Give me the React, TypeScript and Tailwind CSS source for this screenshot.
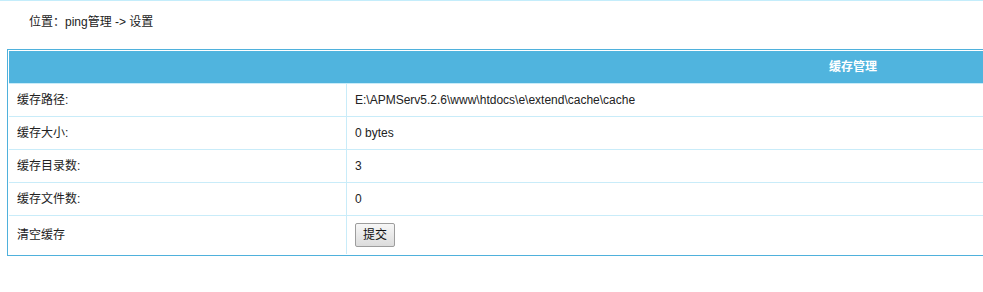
export default function App() {
  const rows = [
    { label: "缓存路径:", value: "E:\\APMServ5.2.6\\www\\htdocs\\e\\extend\\cache\\cache" },
    { label: "缓存大小:", value: "0 bytes" },
    { label: "缓存目录数:", value: "3" },
    { label: "缓存文件数:", value: "0" },
  ];

  return (
    <div
      className="w-full overflow-hidden bg-white text-xs text-[#222]"
      style={{ fontFamily: '"Liberation Sans", "Noto Sans CJK SC", sans-serif' }}
    >
      {/* top strip */}
      <div className="h-px bg-[#c4edfb]" />

      {/* breadcrumb */}
      <div className="h-[48px] pl-[29px] pt-[13px] leading-[16px]">位置：ping管理 -&gt; 设置</div>

      {/* settings table */}
      <div className="ml-[7px] w-[1692px] border border-[#4fb1dc] p-px">
        <div className="flex h-[32px] items-center justify-center bg-[#50b4de] font-bold text-white">
          缓存管理
        </div>

        {rows.map((row) => (
          <div key={row.label} className="flex h-[33px] border-t border-[#c9ecf9]">
            <div className="flex w-[338px] shrink-0 items-center border-r border-[#c9ecf9] pl-2">{row.label}</div>
            <div className="flex items-center pl-2">{row.value}</div>
          </div>
        ))}

        <div className="flex h-[39px] border-t border-[#c9ecf9]">
          <div className="flex w-[338px] shrink-0 items-center border-r border-[#c9ecf9] pl-2">清空缓存</div>
          <div className="flex items-center pl-2">
            <button className="h-[24px] w-[40px] rounded-[2px] border border-[#9d9d9d] bg-gradient-to-b from-[#f7f7f7] to-[#dcdcdc] text-xs text-[#111]">
              提交
            </button>
          </div>
        </div>
      </div>
    </div>
  );
}
